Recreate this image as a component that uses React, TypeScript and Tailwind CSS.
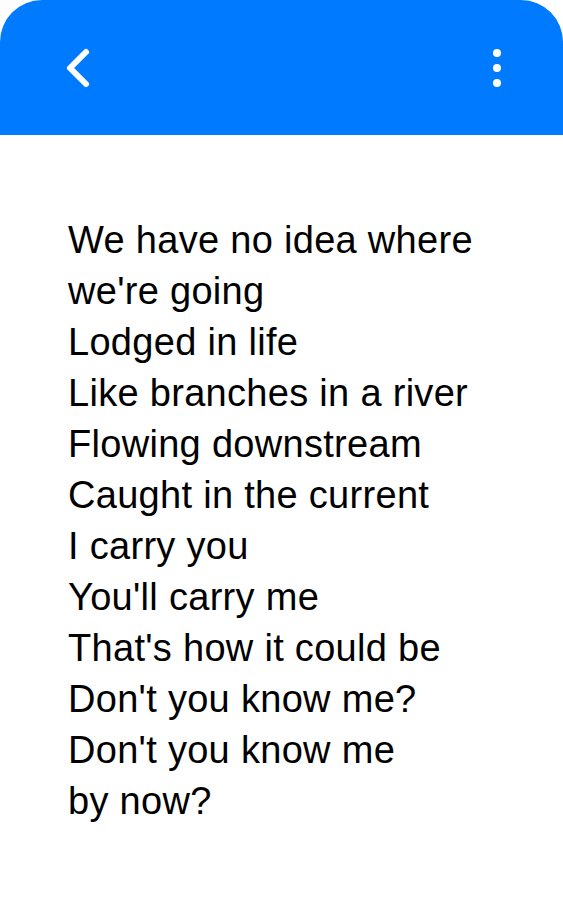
import React from 'react';

const LINES = [
  'We have no idea where',
  "we're going",
  'Lodged in life',
  'Like branches in a river',
  'Flowing downstream',
  'Caught in the current',
  'I carry you',
  "You'll carry me",
  "That's how it could be",
  "Don't you know me?",
  "Don't you know me",
  'by now?',
];

const App: React.FC = () => {
  return (
    <div className="w-[563px] h-[912px] bg-white overflow-hidden font-['Liberation_Sans',Arial,sans-serif]">
      {/* Header */}
      <header className="h-[135px] bg-[#007aff] rounded-t-[42px] flex items-center justify-between pl-[64px] pr-[62px]">
        <button className="w-[30px] h-[44px] flex items-center justify-center">
          <svg width="30" height="44" viewBox="0 0 30 44" fill="none">
            <path d="M22 6 L6 22 L22 38" stroke="white" strokeWidth="6" strokeLinecap="round" strokeLinejoin="round" />
          </svg>
        </button>
        <button className="flex flex-col items-center gap-[7px]">
          <span className="w-[8px] h-[8px] rounded-full bg-white" />
          <span className="w-[8px] h-[8px] rounded-full bg-white" />
          <span className="w-[8px] h-[8px] rounded-full bg-white" />
        </button>
      </header>

      {/* Lyrics */}
      <div className="pt-[80px] pl-[68px] text-[38px] leading-[51px] tracking-[0.3px] text-black">
        {LINES.map((line, i) => (
          <p key={i}>{line}</p>
        ))}
      </div>
    </div>
  );
};

export default App;
